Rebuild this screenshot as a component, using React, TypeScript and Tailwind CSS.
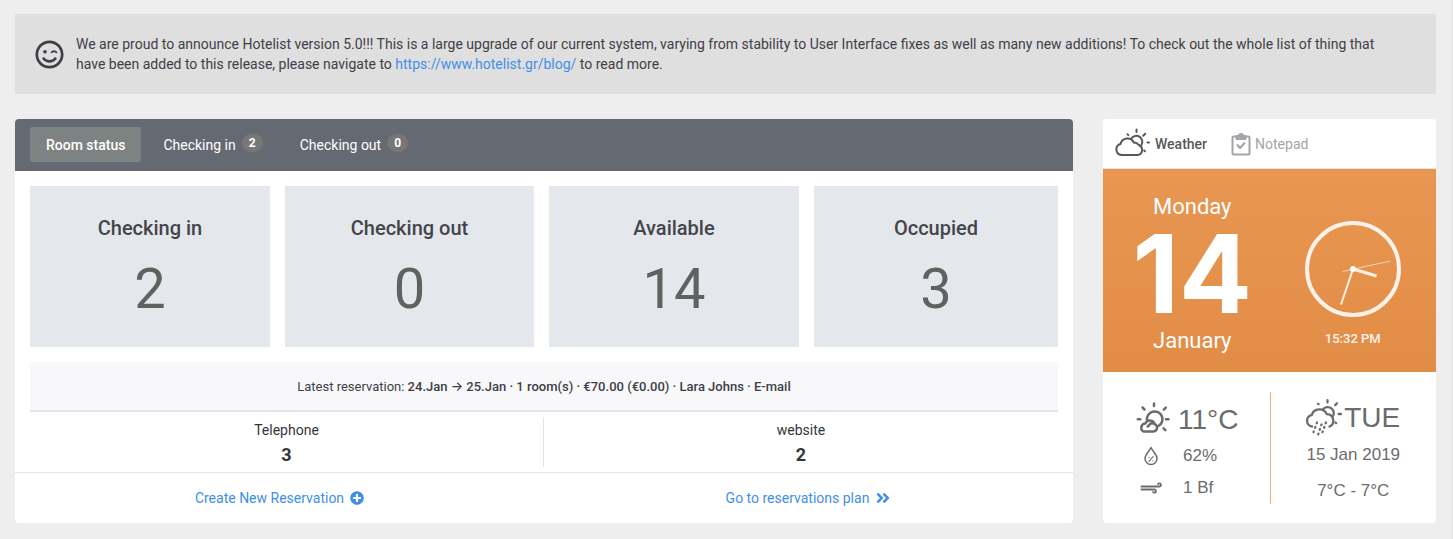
import type { ReactNode } from "react";
import { FaAngleDoubleRight, FaPlusCircle, FaRegSmileWink } from "react-icons/fa";

const tabs = [
  { label: "Room status", active: true },
  { label: "Checking in", count: 2 },
  { label: "Checking out", count: 0 },
];

const rooms = [
  { label: "Checking in", value: 2 },
  { label: "Checking out", value: 0 },
  { label: "Available", value: 14 },
  { label: "Occupied", value: 3 },
];

const sources = [
  { label: "Telephone", value: 3 },
  { label: "website", value: 2 },
];

function Icon({ className, viewBox, children }: { className: string; viewBox: string; children: ReactNode }) {
  return (
    <svg
      className={className}
      viewBox={viewBox}
      fill="none"
      stroke="currentColor"
      strokeWidth="2"
      strokeLinecap="round"
      strokeLinejoin="round"
      aria-hidden="true"
    >
      {children}
    </svg>
  );
}

function CloudSunIcon() {
  return (
    <Icon className="w-9 h-8 shrink-0" viewBox="0 -2 36 32">
      <path d="M6.5 25h16a5.2 5.2 0 0 0 1.3-10 6 6 0 0 0-5-2.500 7 7 0 0 0-13.200 1.500A5.600 5.600 0 0 0 6.500 25Z" />
      <path d="M16.3 8.500a6 6 0 1 1 10 6.800" />
      <path d="M21.500-.5v2.500M12.500 4.300l.8.800M30.200 3.800l-2 2M32.500 12.500h1.500M29.200 20.500l.7.700" />
    </Icon>
  );
}

function SunCloudIcon() {
  return (
    <Icon className="w-[35px] h-[31px] shrink-0 mb-1.5" viewBox="0 0 35 31">
      <g strokeWidth="2.5">
        <path d="M8.500 29.500h10a3.800 3.800 0 0 0 1.200-7.300 5 5 0 0 0-4-.7l-3 3M19.700 22.200a5 5 0 0 0-9.400-.6 4.200 4.200 0 0 0-1.800 7.900" />
        <path d="M12 18.500a7.800 7.800 0 1 1 11.500 5.500" />
        <path d="M19 1.500v2.500M7.500 5.500l2 2M30.800 5.700l-2 2M2.800 17.300h2.500M31 17.300h2.500M28.600 26.300l1.800 1.800" />
      </g>
    </Icon>
  );
}

function RainIcon() {
  return (
    <Icon className="w-[38px] h-[38px] shrink-0" viewBox="0 0 38 38">
      <g strokeWidth="2.3">
        <path d="M6 27.500a5.800 5.800 0 0 1-.3-11.400 8 8 0 0 1 15-1 6.500 6.500 0 0 1 2.800 12.400" />
        <path d="M16.800 10.500a6 6 0 1 1 9.700 7.500" />
        <path d="M21.500 1.200v2.300M12 4.700l.6.600M31 4.300l-1.800 1.800M32.500 15h2.500M29.500 23.500l.6.600" />
        <path strokeDasharray=".8 4" d="m11 23.500-3.500 9.700M15.500 25.500l-3.500 10.500M20 23.500l-3.500 9.700" />
      </g>
    </Icon>
  );
}

function Clock() {
  return (
    <svg className="w-24 h-24" viewBox="0 0 96 96" fill="none" stroke="white" aria-hidden="true">
      <circle cx="48" cy="48" r="46" strokeWidth="4" opacity="0.88" />
      <path d="M48 48 71.5 55" strokeWidth="3" opacity="0.88" />
      <path d="M48 48 36 83.5" strokeWidth="2" opacity="0.88" />
      <path d="M37.5 50.5 85.5 40" strokeWidth="1" opacity="0.6" />
      <circle cx="48" cy="48" r="3" fill="white" stroke="none" />
    </svg>
  );
}

function Announcement() {
  return (
    <div className="flex items-center bg-[#dfdfdf] h-20 pl-5 pr-8 text-[#3f4047]">
      <FaRegSmileWink className="w-[29px] h-[29px] shrink-0" />
      <p className="ml-3 text-sm leading-5">
        We are proud to announce Hotelist version 5.0!!! This is a large upgrade of our current system, varying from
        stability to User Interface fixes as well as many new additions! To check out the whole list of thing that have
        been added to this release, please navigate to{" "}
        <a href="https://www.hotelist.gr/blog/" className="text-[#3f8fe8]">https://www.hotelist.gr/blog/</a> to read more.
      </p>
    </div>
  );
}

function RoomPanel() {
  return (
    <section className="flex-1 bg-white rounded overflow-hidden">

      {/* Tabs */}
      <nav className="flex bg-[#656972] px-[15px] pt-2 pb-[9px] text-sm text-white">
        {tabs.map((tab) => (
          <button
            key={tab.label}
            className={
              tab.active
                ? "h-[35px] px-4 mr-[7px] rounded-xs bg-[#7d8282] font-medium"
                : "flex items-center h-[35px] px-[15px] mr-[7px]"
            }
          >
            {tab.label}
            {!tab.active && (
              <span className="ml-1.5 mb-1 h-[18px] w-[21px] rounded-full bg-[#777] text-xs leading-[18px] font-bold">
                {tab.count}
              </span>
            )}
          </button>
        ))}
      </nav>

      {/* Room counters */}
      <div className="grid grid-cols-[240fr_249fr_250fr_244fr] gap-[15px] p-[15px]">
        {rooms.map((room) => (
          <div key={room.label} className="bg-[#e4e7ec] h-[161px] pt-7 text-center">
            <h3 className="text-xl leading-7 font-medium text-[#44454a]">{room.label}</h3>
            <p className="mt-3 text-[56px] leading-[70px] text-[#616161]">{room.value}</p>
          </div>
        ))}
      </div>

      {/* Latest reservation */}
      <p className="mx-[15px] h-[50px] border-b-2 border-[#e1e5ea] bg-[#f8f8fa] text-center text-[13px] leading-[49px] text-[#3f4047]">
        Latest reservation:{" "}
        <strong className="font-medium">
          24.Jan <span className="font-[Inter,sans-serif]">→</span> 25.Jan · 1 room(s) · €70.00 (€0.00) · Lara Johns · E-mail
        </strong>
      </p>

      <div className="grid grid-cols-2 px-[15px] py-[5px] border-b border-[#e1e3ea] text-center text-[#33363e]">
        {sources.map((source) => (
          <div key={source.label} className="h-[50px] border-r border-[#e1e3e6] last:border-r-0">
            <p className="text-sm leading-[26px]">{source.label}</p>
            <p className="text-lg leading-6 font-bold">{source.value}</p>
          </div>
        ))}
      </div>

      <div className="grid grid-cols-2 text-sm leading-[50px] text-[#3f8fe8]">
        <a href="#new" className="flex items-center justify-center gap-1.5">
          Create New Reservation <FaPlusCircle />
        </a>
        <a href="#plan" className="flex items-center justify-center gap-1.5">
          Go to reservations plan <FaAngleDoubleRight className="w-4 h-4" />
        </a>
      </div>
    </section>
  );
}

function WeatherPanel() {
  return (
    <aside className="w-[333px] shrink-0 bg-white rounded overflow-hidden text-[#6c6c6c]">
      <nav className="flex items-center h-[50px] border-b border-[#e1e5ea] px-3 text-sm">
        <button className="flex items-center gap-1 font-medium text-[#58585a]">
          <CloudSunIcon /> Weather
        </button>
        <button className="flex items-center gap-1 ml-6 text-[#a2a6aa]">
          <Icon className="w-5 h-6" viewBox="0 0 20 24">
            <rect x="1.5" y="4.5" width="17" height="18" rx="1" />
            <path d="m6.5 13 2.5 3 4.5-5" />
            <path d="M5.500 7V4H8a2 2 0 0 1 4 0h2.500v3Z" fill="currentColor" />
          </Icon>
          Notepad
        </button>
      </nav>

      {/* Today */}
      <div className="grid grid-cols-2 h-[203px] bg-linear-to-b from-[#e89652] to-[#e28d46] text-white">
        <div className="pt-6 pl-3 text-center text-[22px] leading-7">
          <p>Monday</p>
          <p className="font-[Inter,sans-serif] text-[108px] leading-[106px] font-bold">14</p>
          <p>January</p>
        </div>
        <div className="flex flex-col items-center pt-[52px]">
          <Clock />
          <p className="mt-3 text-[13px] leading-5 font-medium text-white/90">15:32 PM</p>
        </div>
      </div>

      {/* Conditions and forecast */}
      <div className="grid grid-cols-2 pt-5 pb-[19px] font-['Liberation_Sans',Arial,sans-serif] text-[17px]">
        <div className="h-28 pl-8 pt-2">
          <div className="flex items-center gap-2 h-10 text-[28px]">
            <SunCloudIcon /> 11°C
          </div>
          <div className="flex items-center h-8 pl-2">
            <Icon className="w-4 h-5 mr-6" viewBox="0 0 16 20">
              <path strokeWidth="1.5" d="M8 1.500C6 6 2 8.500 2 12.500a6 6 0 0 0 12 0C14 8.500 10 6 8 1.500Z" />
              <path strokeWidth="1.2" d="m10 10.500-4 5M6 11.300v.1M10 14.800v.1" />
            </Icon>
            62%
          </div>
          <div className="flex items-center h-8 pl-1">
            <Icon className="w-6 h-4 mr-5" viewBox="0 0 24 16">
              <path strokeWidth="1.8" d="M2.500 6.500h18a1.600 1.600 0 1 0-1.500-2.500M2.500 9.500h13a1.600 1.600 0 1 1-1.500 2.500" />
            </Icon>
            1 Bf
          </div>
        </div>
        <div className="h-28 border-l border-[#e5ae80] text-center pt-1.5">
          <div className="flex items-center justify-center h-10 text-[28px]">
            <RainIcon /> TUE
          </div>
          <p className="leading-[34px]">15 Jan 2019</p>
          <p className="leading-[38px]">7°C - 7°C</p>
        </div>
      </div>
    </aside>
  );
}

export default function App() {
  return (
    <main className="min-h-screen bg-[#eee] border-r border-[#e2e2e2] pt-3.5 px-[15px] pb-4 font-[Roboto,sans-serif]">
      <div className="mr-px">
        <Announcement />
        <div className="flex gap-[30px] mt-[25px]">
          <RoomPanel />
          <WeatherPanel />
        </div>
      </div>
    </main>
  );
}
